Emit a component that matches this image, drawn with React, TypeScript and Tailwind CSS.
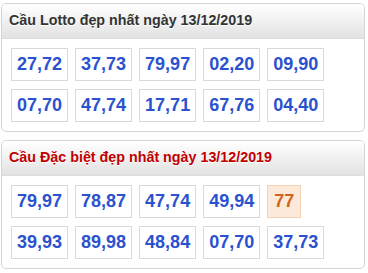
const lotto = [
  ["27,72", "37,73", "79,97", "02,20", "09,90"],
  ["07,70", "47,74", "17,71", "67,76", "04,40"],
];

const special = [
  ["79,97", "78,87", "47,74", "49,94", "77"],
  ["39,93", "89,98", "48,84", "07,70", "37,73"],
];

const NumBox = ({ value }: { value: string }) => {
  const hot = value.length === 2;
  return (
    <div
      className={
        hot
          ? "h-[33px] px-[6px] flex items-center border border-[#f5d2b4] bg-[#fde9d9] text-[#d2651e] text-[18px] font-bold"
          : "h-[33px] px-[5px] flex items-center border border-[#d9d9d9] bg-white text-[#2a52cf] text-[18px] font-bold"
      }
    >
      {value}
    </div>
  );
};

const Panel = ({
  title,
  titleClass,
  rows,
}: {
  title: string;
  titleClass: string;
  rows: string[][];
}) => (
  <div className="w-[364px] border border-[#d4d4d4] rounded-[5px] bg-white overflow-hidden">
    <div
      className={`h-[35px] pl-[7px] flex items-center border-b border-[#dcdcdc] bg-gradient-to-b from-white to-[#e2e2e2] text-[14.3px] font-bold [text-shadow:0_1px_0_#fff] ${titleClass}`}
    >
      {title}
    </div>
    <div className="pl-[9px] pt-[9px] pb-[9px] flex flex-col gap-[8px]">
      {rows.map((row, i) => (
        <div key={i} className="flex gap-[7px]">
          {row.map((v, j) => (
            <NumBox key={j} value={v} />
          ))}
        </div>
      ))}
    </div>
  </div>
);

export default function App() {
  return (
    <div className="w-[368px] h-[273px] bg-white pl-[1px] pt-[3px] flex flex-col gap-[8px] font-['Liberation_Sans',Arial,sans-serif]">
      <Panel
        title="Cầu Lotto đẹp nhất ngày 13/12/2019"
        titleClass="text-[#333333]"
        rows={lotto}
      />
      <Panel
        title="Cầu Đặc biệt đẹp nhất ngày 13/12/2019"
        titleClass="text-[#c00000]"
        rows={special}
      />
    </div>
  );
}
